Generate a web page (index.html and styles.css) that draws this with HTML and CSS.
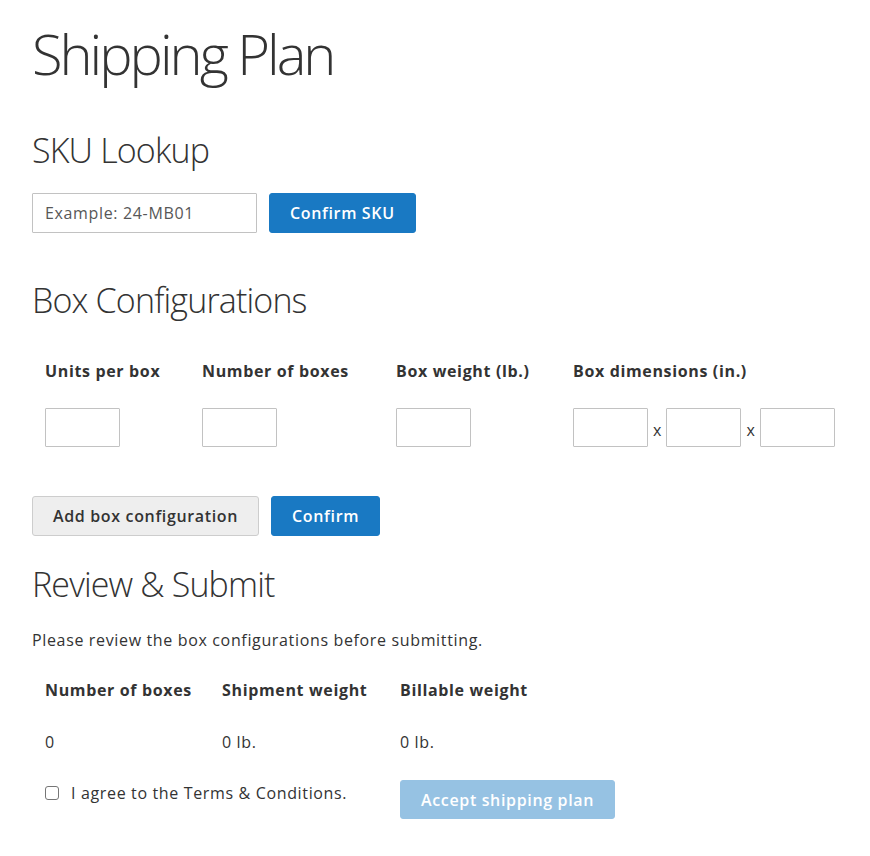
FILE: index.html
```html
<!DOCTYPE html>
<html lang="en">
<head>
<meta charset="utf-8">
<title>Shipping Plan</title>
<link rel="stylesheet" href="styles.css">
</head>
<body>
<main class="page">
  <h1 class="page-title">Shipping Plan</h1>

  <section class="sku">
    <h2 class="section-title">SKU Lookup</h2>
    <div class="sku-row">
      <input class="field field-sku" type="text" placeholder="Example: 24-MB01">
      <button class="btn btn-primary" type="button">Confirm SKU</button>
    </div>
  </section>

  <section class="boxes">
    <h2 class="section-title section-title-boxes">Box Configurations</h2>
    <div class="config-grid">
      <div class="col-label">Units per box</div>
      <div class="col-label">Number of boxes</div>
      <div class="col-label">Box weight (lb.)</div>
      <div class="col-label">Box dimensions (in.)</div>
      <div><input class="field field-small" type="text"></div>
      <div><input class="field field-small" type="text"></div>
      <div><input class="field field-small" type="text"></div>
      <div class="dims">
        <input class="field field-small" type="text">
        <span class="times">x</span>
        <input class="field field-small" type="text">
        <span class="times">x</span>
        <input class="field field-small" type="text">
      </div>
    </div>
    <div class="actions">
      <button class="btn btn-secondary" type="button">Add box configuration</button>
      <button class="btn btn-primary" type="button">Confirm</button>
    </div>
  </section>

  <section class="review">
    <h2 class="section-title section-title-review">Review &amp; Submit</h2>
    <p class="note">Please review the box configurations before submitting.</p>
    <div class="summary-grid">
      <div class="col-label">Number of boxes</div>
      <div class="col-label">Shipment weight</div>
      <div class="col-label">Billable weight</div>
      <div class="col-value">0</div>
      <div class="col-value">0 lb.</div>
      <div class="col-value">0 lb.</div>
    </div>
    <div class="agree-row">
      <label class="agree">
        <input class="checkbox" type="checkbox">
        <span>I agree to the Terms &amp; Conditions.</span>
      </label>
      <button class="btn btn-primary btn-accept" type="button" disabled>Accept shipping plan</button>
    </div>
  </section>
</main>
</body>
</html>
```

FILE: styles.css
```css
html, body {
  margin: 0;
  padding: 0;
  background: #ffffff;
}

body {
  font-family: "Open Sans", "Liberation Sans", sans-serif;
  font-size: 16px;
  line-height: 22px;
  letter-spacing: 0.65px;
  color: #333333;
}

.page {
  padding: 20px 32px 0 32px;
}

.page-title {
  margin: 0 0 42px 0;
  font-size: 56px;
  line-height: 67px;
  font-weight: 300;
  letter-spacing: -3px;
}

.section-title {
  margin: 0 0 22px 0;
  font-size: 34px;
  line-height: 42px;
  font-weight: 300;
  letter-spacing: -0.85px;
}

.section-title-boxes {
  margin-bottom: 39px;
}

.section-title-review {
  margin-bottom: 24px;
}

.sku-row {
  display: flex;
  gap: 12px;
  margin-bottom: 46px;
}

.field {
  box-sizing: border-box;
  border: 1px solid #c2c2c2;
  border-radius: 1px;
  background: #ffffff;
  font-family: "Open Sans", "Liberation Sans", sans-serif;
  font-size: 16px;
  letter-spacing: 0.65px;
  color: #333333;
  margin: 0;
  outline: none;
}

.field-sku {
  width: 225px;
  height: 40px;
  padding: 0 12px;
}

.field-sku::placeholder {
  color: #575757;
  opacity: 1;
}

.field-small {
  width: 75px;
  height: 39px;
  padding: 0 8px;
}

.btn {
  box-sizing: border-box;
  height: 40px;
  padding: 0 20px;
  border-radius: 3px;
  font-family: "Open Sans", "Liberation Sans", sans-serif;
  font-size: 16px;
  font-weight: 600;
  line-height: 22px;
  letter-spacing: 0.65px;
  cursor: pointer;
  margin: 0;
}

.btn-primary {
  background: #1979c3;
  border: 1px solid #1979c3;
  color: #ffffff;
}

.btn-secondary {
  background: #eeeeee;
  border: 1px solid #cdcdcd;
  color: #333333;
}

.config-grid {
  display: grid;
  grid-template-columns: 157px 194px 177px auto;
  row-gap: 26px;
  padding-left: 13px;
  margin-bottom: 49px;
}

.col-label {
  font-weight: 700;
  line-height: 22px;
}

.col-value {
  line-height: 22px;
}

.dims {
  display: flex;
  align-items: center;
}

.times {
  margin: 0 5px;
  line-height: 22px;
  padding-top: 4px;
  letter-spacing: 0;
}

.actions {
  display: flex;
  gap: 12px;
  margin-bottom: 27px;
}

.note {
  margin: 0 0 28px 0;
}

.summary-grid {
  display: grid;
  grid-template-columns: 177px 178px auto;
  row-gap: 30px;
  padding-left: 13px;
  margin-bottom: 27px;
}

.agree-row {
  display: grid;
  grid-template-columns: 355px auto;
  align-items: start;
  padding-left: 13px;
}

.agree {
  display: flex;
  align-items: center;
  gap: 12px;
  padding-top: 2px;
}

.checkbox {
  appearance: none;
  -webkit-appearance: none;
  box-sizing: border-box;
  width: 14px;
  height: 14px;
  margin: 0;
  border: 1px solid #767676;
  border-radius: 3px;
  background: #ffffff;
}

.btn-accept {
  justify-self: start;
  height: 39px;
  opacity: 0.45;
  cursor: default;
}
```
